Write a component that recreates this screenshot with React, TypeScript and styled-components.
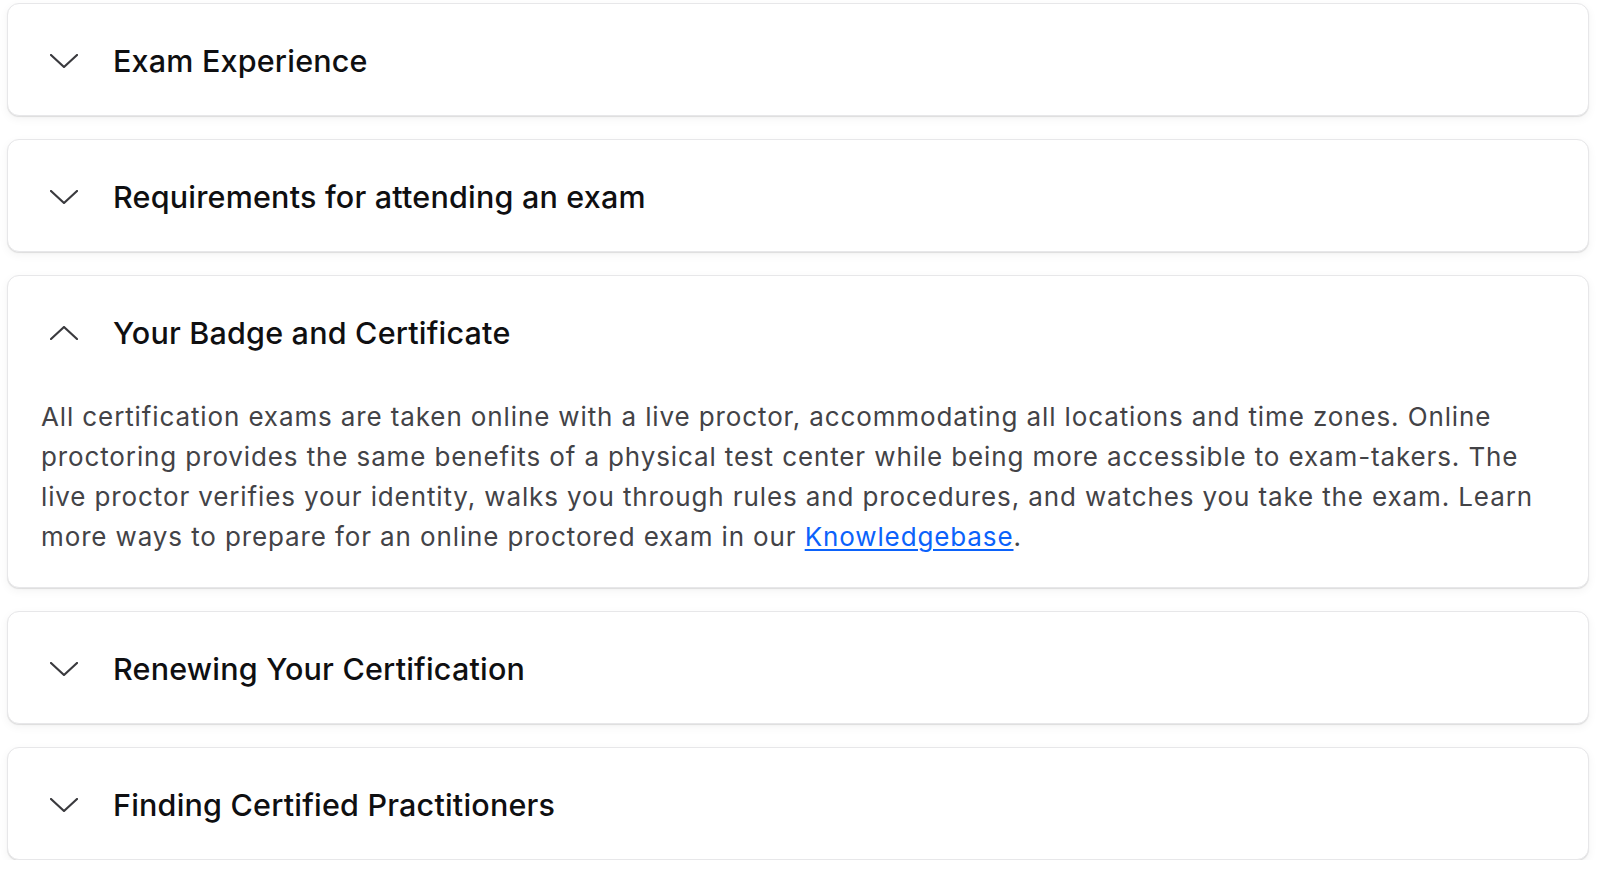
import React, { useState } from "react";
import styled, { createGlobalStyle } from "styled-components";

const Global = createGlobalStyle`
  html, body { margin: 0; padding: 0; background: #ffffff; }
  body { font-family: Inter, "Noto Sans", "Liberation Sans", sans-serif; -webkit-font-smoothing: antialiased; }
`;

const List = styled.div`
  display: flex;
  flex-direction: column;
  gap: 23px;
  padding: 3px 11px 0 7px;
`;

const Card = styled.section`
  background: #fff;
  border: 1px solid #e7e7e9;
  border-radius: 12px;
  box-shadow: 0 1px 1px rgba(0, 0, 0, 0.1), 0 3px 10px rgba(0, 0, 0, 0.05);
`;

const Header = styled.button`
  display: flex;
  align-items: center;
  gap: 35px;
  width: 100%;
  height: 111px;
  padding: 2px 0 0 42px;
  border: 0;
  background: transparent;
  cursor: pointer;
  text-align: left;
`;

const Chevron = styled.svg`
  width: 28px;
  height: 14px;
  flex: none;
  color: #3a3a3e;
`;

const Title = styled.span`
  font-family: Inter, "Noto Sans", sans-serif;
  font-size: 30.5px;
  font-weight: 540;
  letter-spacing: 0.2px;
  color: #0f0f11;
`;

const Body = styled.p`
  margin: 0;
  padding: 10px 33px 30px 33px;
  font-family: Inter, "Noto Sans", sans-serif;
  font-size: 26px;
  letter-spacing: 0.88px;
  line-height: 40px;
  font-weight: 400;
  color: #434347;
`;

const Link = styled.a`
  color: #0b62fb;
  text-decoration: underline;
  text-underline-offset: 3px;
  text-decoration-thickness: 2px;
`;

const Arrow = ({ open }: { open: boolean }) => (
  <Chevron viewBox="0 0 28 14" fill="none">
    <path
      d={open ? "M1 13 L14 1 L27 13" : "M1 1 L14 13 L27 1"}
      stroke="currentColor"
      strokeWidth="2.2"
      strokeLinecap="round"
      strokeLinejoin="round"
    />
  </Chevron>
);

const items = [
  "Exam Experience",
  "Requirements for attending an exam",
  "Your Badge and Certificate",
  "Renewing Your Certification",
  "Finding Certified Practitioners",
];

export default function App() {
  const [open, setOpen] = useState(2);
  return (
    <>
      <Global />
      <List>
        {items.map((t, i) => (
          <Card key={t}>
            <Header onClick={() => setOpen(open === i ? -1 : i)}>
              <Arrow open={open === i} />
              <Title>{t}</Title>
            </Header>
            {open === i && (
              <Body>
                All certification exams are taken online with a live proctor, accommodating all locations and time
                zones. Online proctoring provides the same benefits of a physical test center while being more
                accessible to exam-takers. The live proctor verifies your identity, walks you through rules and
                procedures, and watches you take the exam. Learn more ways to prepare for an online proctored exam
                in our <Link href="#">Knowledgebase</Link>.
              </Body>
            )}
          </Card>
        ))}
      </List>
    </>
  );
}
